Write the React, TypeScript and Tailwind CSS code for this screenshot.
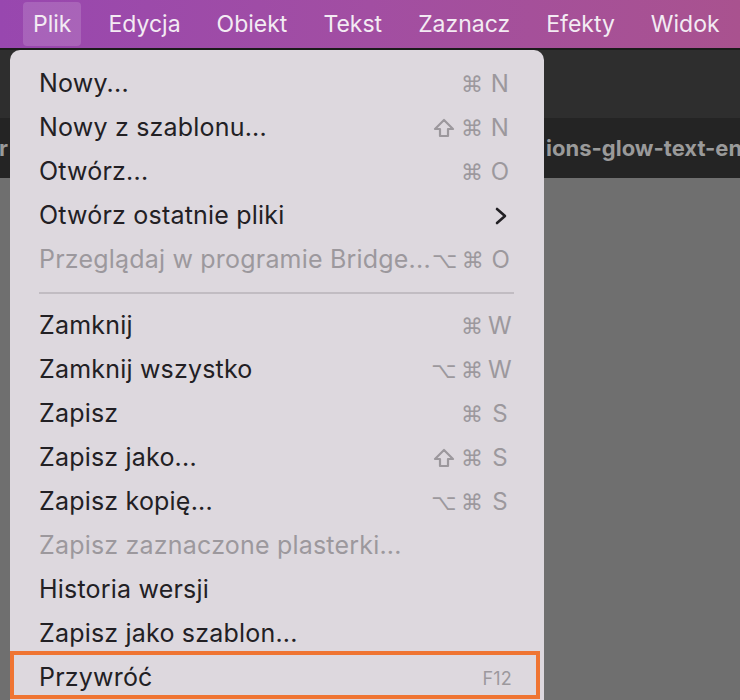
import React from 'react';

type Item =
  | { kind: 'item'; label: string; keys?: string[]; disabled?: boolean; submenu?: boolean; fkey?: string }
  | { kind: 'sep' };

const menuBar = ['Plik', 'Edycja', 'Obiekt', 'Tekst', 'Zaznacz', 'Efekty', 'Widok'];

const items: Item[] = [
  { kind: 'item', label: 'Nowy...', keys: ['⌘', 'N'] },
  { kind: 'item', label: 'Nowy z szablonu...', keys: ['⇧', '⌘', 'N'] },
  { kind: 'item', label: 'Otwórz...', keys: ['⌘', 'O'] },
  { kind: 'item', label: 'Otwórz ostatnie pliki', submenu: true },
  { kind: 'item', label: 'Przeglądaj w programie Bridge...', keys: ['⌥', '⌘', 'O'], disabled: true },
  { kind: 'sep' },
  { kind: 'item', label: 'Zamknij', keys: ['⌘', 'W'] },
  { kind: 'item', label: 'Zamknij wszystko', keys: ['⌥', '⌘', 'W'] },
  { kind: 'item', label: 'Zapisz', keys: ['⌘', 'S'] },
  { kind: 'item', label: 'Zapisz jako...', keys: ['⇧', '⌘', 'S'] },
  { kind: 'item', label: 'Zapisz kopię...', keys: ['⌥', '⌘', 'S'] },
  { kind: 'item', label: 'Zapisz zaznaczone plasterki...', disabled: true },
  { kind: 'item', label: 'Historia wersji' },
  { kind: 'item', label: 'Zapisz jako szablon...' },
  { kind: 'item', label: 'Przywróć', fkey: 'F12' },
];

function ShiftIcon() {
  return (
    <svg width="22" height="22" viewBox="0 0 22 22" className="mx-auto">
      <path d="M11 3 L20 12 H15 V19 H7 V12 H2 Z" fill="none" stroke="#9c989d" strokeWidth="2.2" strokeLinejoin="round" />
    </svg>
  );
}

function Shortcut({ keys }: { keys: string[] }) {
  return (
    <div className="flex items-center text-[#9c989d]">
      {keys.map((k, i) =>
        k === '⇧' ? (
          <span key={i} className="w-[28px] flex justify-center">
            <ShiftIcon />
          </span>
        ) : (
          <span
            key={i}
            className={
              i === keys.length - 1
                ? 'w-[28px] text-center text-[24px]'
                : 'w-[28px] text-center text-[22px] font-["DejaVu_Sans",sans-serif]'
            }
          >
            {k}
          </span>
        )
      )}
    </div>
  );
}

export default function App() {
  return (
    <div className="relative w-[740px] h-[700px] overflow-hidden bg-[#6f6f6f] font-['Inter','Noto_Sans',sans-serif]">
      {/* menu bar */}
      <div className="h-[48px] flex items-center pl-[23px] bg-gradient-to-r from-[#9847af] via-[#a24ea2] to-[#a9528f] text-[23px] text-[#f3ebf3]">
        {menuBar.map((m, i) => (
          <div
            key={m}
            className={
              i === 0
                ? 'h-[44px] flex items-center px-[10px] mr-[17px] rounded-[4px] bg-white/15'
                : 'h-[44px] flex items-center px-[10px] mr-[16px]'
            }
          >
            {m}
          </div>
        ))}
      </div>
      <div className="h-[2px] bg-[#1b1b1b]" />
      <div className="h-[68px] bg-[#2e2e2e]" />
      <div className="h-[60px] bg-[#242424] flex items-center overflow-hidden whitespace-nowrap text-[22px] font-bold text-[#9a9a9a]">
        <div className="w-[546px] shrink-0 overflow-hidden">
          <span className="-ml-[14px]">er</span>
        </div>
        <span>ions-glow-text-en</span>
      </div>

      {/* dropdown */}
      <div className="absolute left-[10px] top-[50px] w-[534px] h-[680px] rounded-[10px] bg-[#ddd8de] pt-[12px] pl-[29px] pr-[30px] text-[25px] tracking-[0.2px] text-[#222024]">
        {items.map((it, idx) =>
          it.kind === 'sep' ? (
            <div key={idx} className="h-[22px] flex items-center">
              <div className="h-[2px] w-full bg-[#c1bcc2]" />
            </div>
          ) : (
            <div key={idx} className="h-[44px] flex items-center justify-between whitespace-nowrap">
              <span className={it.disabled ? 'text-[#9c989d]' : ''}>{it.label}</span>
              {it.keys && <Shortcut keys={it.keys} />}
              {it.submenu && (
                <svg width="14" height="20" viewBox="0 0 14 20" className="mr-[6px]">
                  <path d="M3 3 L11 10 L3 17" fill="none" stroke="#222024" strokeWidth="2.6" strokeLinecap="round" strokeLinejoin="round" />
                </svg>
              )}
              {it.fkey && <span className="text-[18px] text-[#9c989d] pr-[2px]">{it.fkey}</span>}
            </div>
          )
        )}
        {/* highlight annotation */}
        <div className="absolute left-0 top-[601px] w-[530px] h-[48px] border-[4px] border-[#ef7432]" />
      </div>
    </div>
  );
}
